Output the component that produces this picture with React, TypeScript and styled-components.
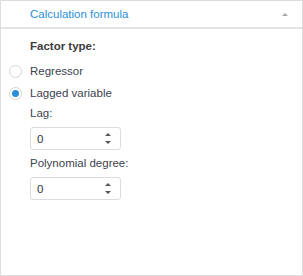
import React, { useState } from "react";
import styled, { createGlobalStyle } from "styled-components";

const GlobalStyle = createGlobalStyle`
  html, body {
    margin: 0;
    padding: 0;
    background: #ffffff;
  }
  body {
    font-family: "Liberation Sans", Arial, sans-serif;
    font-size: 11.5px;
    color: #3d4350;
  }
`;

const Panel = styled.section`
  width: 303px;
  height: 276px;
  box-sizing: border-box;
  border: 1px solid #dddddd;
  display: flex;
  flex-direction: column;
`;

const Header = styled.div`
  height: 28px;
  box-sizing: border-box;
  border-bottom: 2px solid #e3e3e3;
  display: flex;
  align-items: center;
  justify-content: space-between;
  padding: 0 14px 0 29px;
  color: #2b8fd8;
`;

const Caret = styled.span`
  width: 0;
  height: 0;
  border-left: 3px solid transparent;
  border-right: 3px solid transparent;
  border-bottom: 3px solid #a8a8a8;
`;

const Body = styled.div`
  display: flex;
  flex-direction: column;
  padding: 8px 0 0 29px;
`;

const Title = styled.div`
  font-weight: bold;
  color: #3c3c3c;
  height: 18px;
  line-height: 18px;
  margin-bottom: 5px;
`;

const RadioRow = styled.label`
  display: flex;
  align-items: center;
  height: 22px;
  margin-left: -21px;
  cursor: pointer;
`;

const RadioCircle = styled.span<{ checked: boolean }>`
  width: 13px;
  height: 13px;
  box-sizing: border-box;
  border: 1px solid #d4d4d4;
  border-radius: 50%;
  margin-right: 8px;
  display: flex;
  align-items: center;
  justify-content: center;
  background: #ffffff;

  &::after {
    content: "";
    width: 7px;
    height: 7px;
    border-radius: 50%;
    background: ${({ checked }) => (checked ? "#2b8fd8" : "transparent")};
  }
`;

const FieldLabel = styled.div`
  height: 18px;
  line-height: 18px;
  margin-bottom: 5px;
`;

const SpinBox = styled.div`
  width: 91px;
  height: 23px;
  box-sizing: border-box;
  border: 1px solid #dcdcdc;
  border-radius: 3px;
  display: flex;
  align-items: center;
  justify-content: space-between;
  padding: 0 9px 0 6px;
  margin-bottom: 4px;
  color: #333333;
`;

const Arrows = styled.div`
  display: flex;
  flex-direction: column;
  gap: 5px;
`;

const Arrow = styled.span<{ dir: "up" | "down" }>`
  width: 0;
  height: 0;
  border-left: 3px solid transparent;
  border-right: 3px solid transparent;
  ${({ dir }) =>
    dir === "up" ? "border-bottom: 3px solid #555555;" : "border-top: 3px solid #555555;"}
`;

const Spin = ({ value }: { value: string }) => (
  <SpinBox>
    <span>{value}</span>
    <Arrows>
      <Arrow dir="up" />
      <Arrow dir="down" />
    </Arrows>
  </SpinBox>
);

const App = () => {
  const [factor, setFactor] = useState("lagged");

  return (
    <>
      <GlobalStyle />
      <Panel>
        <Header>
          <span>Calculation formula</span>
          <Caret />
        </Header>
        <Body>
          <Title>Factor type:</Title>
          <RadioRow onClick={() => setFactor("regressor")}>
            <RadioCircle checked={factor === "regressor"} />
            Regressor
          </RadioRow>
          <RadioRow onClick={() => setFactor("lagged")}>
            <RadioCircle checked={factor === "lagged"} />
            Lagged variable
          </RadioRow>
          <FieldLabel>Lag:</FieldLabel>
          <Spin value="0" />
          <FieldLabel>Polynomial degree:</FieldLabel>
          <Spin value="0" />
        </Body>
      </Panel>
    </>
  );
};

export default App;
